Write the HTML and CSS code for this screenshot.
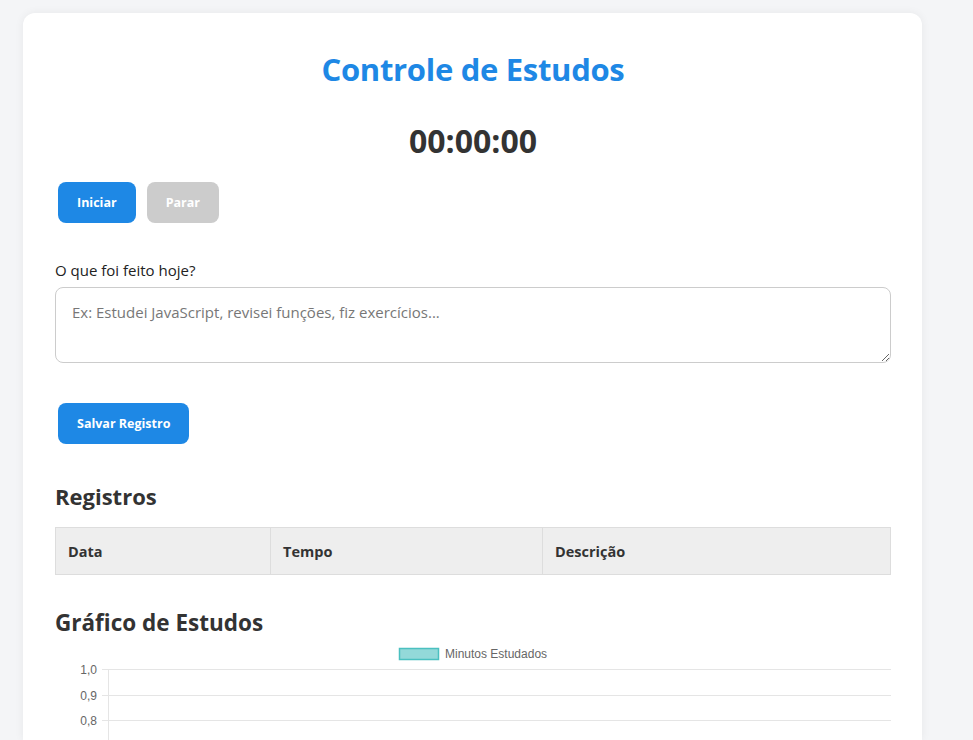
FILE: index.html
```html
<!DOCTYPE html>
<html lang="pt-BR">
<head>
<meta charset="UTF-8">
<title>Controle de Estudos</title>
<link rel="stylesheet" href="styles.css">
</head>
<body>
<div class="container">
  <h1 class="title">Controle de Estudos</h1>
  <div class="timer">00:00:00</div>
  <div class="controls">
    <button class="btn btn-primary">Iniciar</button>
    <button class="btn btn-disabled">Parar</button>
  </div>
  <label class="label" for="desc">O que foi feito hoje?</label>
  <textarea id="desc" class="textarea" placeholder="Ex: Estudei JavaScript, revisei funções, fiz exercícios..."></textarea>
  <div class="save-row">
    <button class="btn btn-primary">Salvar Registro</button>
  </div>
  <h2 class="section-title">Registros</h2>
  <table class="records">
    <thead>
      <tr>
        <th class="col-data">Data</th>
        <th class="col-tempo">Tempo</th>
        <th class="col-desc">Descrição</th>
      </tr>
    </thead>
    <tbody></tbody>
  </table>
  <h2 class="section-title chart-title">Gráfico de Estudos</h2>
  <div class="chart">
    <svg width="836" height="100" viewBox="0 0 836 100">
      <rect x="344.5" y="7.5" width="39" height="11" fill="rgba(75,192,192,0.6)" stroke="rgb(75,192,192)" stroke-width="1.5"/>
      <text x="390" y="16.5" class="legend-text">Minutos Estudados</text>
      <g stroke="#e5e5e5" stroke-width="1">
        <line x1="47" y1="28.5" x2="836" y2="28.5"/>
        <line x1="47" y1="54.5" x2="836" y2="54.5"/>
        <line x1="47" y1="79.5" x2="836" y2="79.5"/>
        <line x1="53.5" y1="28" x2="53.5" y2="100"/>
      </g>
      <g class="axis-text" text-anchor="end">
        <text x="42" y="32.5">1,0</text>
        <text x="42" y="58.5">0,9</text>
        <text x="42" y="83.5">0,8</text>
      </g>
    </svg>
  </div>
</div>
</body>
</html>
```

FILE: styles.css
```css
* {
  box-sizing: border-box;
}

html,
body {
  height: 740px;
  overflow: hidden;
}

body {
  margin: 0;
  padding-top: 13px;
  background: #f4f5f7;
  font-family: "Open Sans", "Noto Sans", sans-serif;
  color: #333;
}

.container {
  width: 899px;
  margin-left: 23px;
  background: #fff;
  border-radius: 12px 12px 0 0;
  box-shadow: 0 0 10px rgba(0, 0, 0, 0.06);
  padding: 32px 31px 0 32px;
  height: 727px;
  overflow: hidden;
}

.title {
  margin: 4px 0 0;
  text-align: center;
  color: #1e88e5;
  font-size: 31px;
  font-weight: 700;
  line-height: 40px;
  letter-spacing: -0.3px;
}

.timer {
  margin-top: 32px;
  text-align: center;
  font-size: 32px;
  font-weight: 700;
  line-height: 40px;
  color: #333;
}

.controls {
  margin-top: 21px;
  display: flex;
  gap: 11px;
  padding-left: 3px;
}

.btn {
  border: none;
  border-radius: 8px;
  height: 41px;
  padding: 0 19px;
  font-family: inherit;
  font-size: 12.5px;
  font-weight: 700;
  color: #fff;
  cursor: pointer;
}

.btn-primary {
  background: #1e88e5;
}

.btn-disabled {
  background: #ccc;
}

.label {
  display: block;
  margin-top: 37px;
  font-size: 15px;
  line-height: 20px;
  color: #222;
}

.textarea {
  display: block;
  margin-top: 7px;
  width: 100%;
  height: 76px;
  border: 1px solid #ccc;
  border-radius: 8px;
  padding: 14px 16px;
  font-family: inherit;
  font-size: 15px;
  line-height: 1.4;
  color: #333;
  resize: vertical;
}

.textarea::placeholder {
  color: #777;
}

.save-row {
  margin-top: 40px;
  padding-left: 3px;
}

.section-title {
  margin: 37px 0 0;
  font-size: 22px;
  font-weight: 700;
  line-height: 30px;
  color: #333;
}

.records {
  margin-top: 16px;
  width: 100%;
  border-collapse: collapse;
}

.records th {
  background: #eee;
  border: 1px solid #ddd;
  text-align: left;
  padding: 0 12px;
  height: 47px;
  font-size: 14.5px;
  font-weight: 700;
  color: #333;
}

.col-data {
  width: 215px;
}

.col-tempo {
  width: 272px;
}

.chart-title {
  margin-top: 33px;
  font-size: 22.5px;
}

.chart {
  margin-top: 3px;
}

.chart svg {
  display: block;
}

.legend-text {
  font-family: "Liberation Sans", Arial, sans-serif;
  font-size: 12px;
  fill: #666;
}

.axis-text text {
  font-family: "Liberation Sans", Arial, sans-serif;
  font-size: 12px;
  fill: #666;
}
```
